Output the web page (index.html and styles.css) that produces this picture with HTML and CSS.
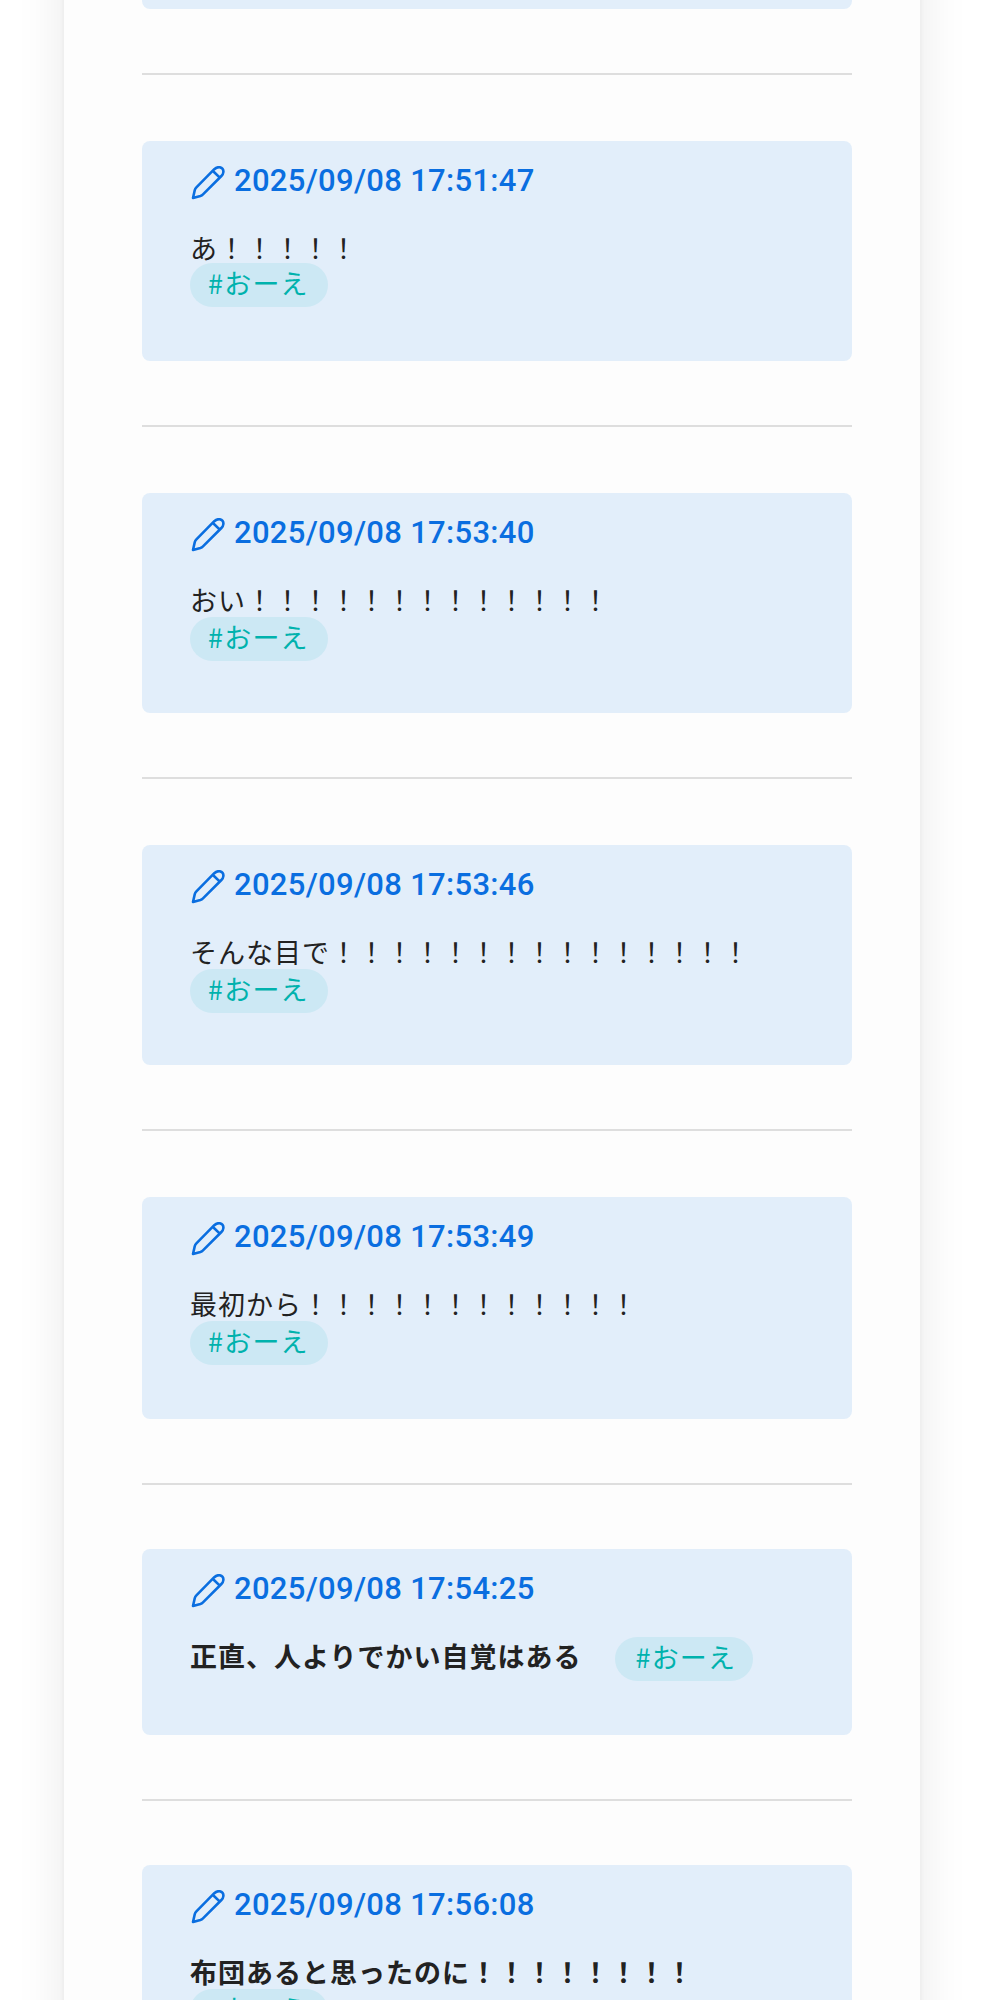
FILE: index.html
```
<!DOCTYPE html>
<html lang="ja">
<head>
  <meta charset="UTF-8">
  <meta name="viewport" content="width=device-width, initial-scale=1.0">
  <title>#おーえ</title>
  <link rel="stylesheet" href="styles.css">
</head>
<body>

  <svg class="defs">
    <symbol id="pencil" viewBox="0 0 34 34">
      <path d="M2 32 L3.8 24 Q4.2 22.6 5.4 21.4 L23.3 3.2 Q25.6 1 28.6 1.2 Q32.6 2 32.4 6 Q32.2 8.2 30.4 10 L12 28.3 Q10.9 29.4 9.4 29.9 Z M22.2 5.2 L28.8 11.6"/>
    </symbol>
  </svg>

  <main class="container">
    <article class="post first"></article>
    <hr>

    <article class="post short">
      <a class="date" href="#"><svg class="icon"><use href="#pencil"/></svg><span>2025/09/08 17:51:47</span></a>
      <p class="text">あ！！！！！</p>
      <a class="tag" href="#">#おーえ</a>
    </article>
    <hr>

    <article class="post">
      <a class="date" href="#"><svg class="icon"><use href="#pencil"/></svg><span>2025/09/08 17:53:40</span></a>
      <p class="text">おい！！！！！！！！！！！！！</p>
      <a class="tag" href="#">#おーえ</a>
    </article>
    <hr>

    <article class="post">
      <a class="date" href="#"><svg class="icon"><use href="#pencil"/></svg><span>2025/09/08 17:53:46</span></a>
      <p class="text">そんな目で！！！！！！！！！！！！！！！</p>
      <a class="tag" href="#">#おーえ</a>
    </article>
    <hr>

    <article class="post tall">
      <a class="date" href="#"><svg class="icon"><use href="#pencil"/></svg><span>2025/09/08 17:53:49</span></a>
      <p class="text">最初から！！！！！！！！！！！！</p>
      <a class="tag" href="#">#おーえ</a>
    </article>
    <hr class="tight">

    <article class="post inline">
      <a class="date" href="#"><svg class="icon"><use href="#pencil"/></svg><span>2025/09/08 17:54:25</span></a>
      <div class="row">
        <p class="text bold">正直、人よりでかい自覚はある</p>
        <a class="tag" href="#">#おーえ</a>
      </div>
    </article>
    <hr class="tight">

    <article class="post">
      <a class="date" href="#"><svg class="icon"><use href="#pencil"/></svg><span>2025/09/08 17:56:08</span></a>
      <p class="text bold">布団あると思ったのに！！！！！！！！</p>
      <a class="tag" href="#">#おーえ</a>
    </article>
  </main>

</body>
</html>
```
FILE: styles.css
```
* {
  box-sizing: border-box;
}

html {
  overflow: hidden;
}

body {
  margin: 0;
  height: 2000px;
  overflow: hidden;
  background: #fff;
  color: #222;
  font-family: "Noto Sans CJK JP", sans-serif;
}

.defs {
  display: none;
}

.container {
  width: 856px;
  height: 2200px;
  margin: -100px 0 0 64px;
  padding: 100px 68px 0 78px;
  background: #fdfdfd;
  box-shadow: 0 0 48px rgba(0, 0, 0, 0.09), 0 0 6px rgba(0, 0, 0, 0.05);
}

.post {
  height: 220px;
  padding: 22px 48px 0;
  border-radius: 8px;
  background: #e2eefa;
}

.post.first {
  height: 9px;
  padding: 0;
  border-radius: 0 0 8px 8px;
}

.post.tall {
  height: 222px;
}

.post.inline {
  height: 186px;
}

hr {
  height: 2px;
  margin: 64px 0 66px;
  border: 0;
  background: #dedede;
}

hr.tight {
  margin-bottom: 64px;
}

.date {
  display: flex;
  align-items: center;
  height: 36px;
  color: #0a6ee0;
  font-family: Roboto, sans-serif;
  font-size: 31px;
  font-weight: 500;
  letter-spacing: 0.3px;
  line-height: 36px;
  text-decoration: none;
}

.icon {
  width: 34px;
  height: 34px;
  margin: 4px 9px 0 1px;
  fill: none;
  stroke: currentColor;
  stroke-width: 2.6;
  stroke-linejoin: round;
}

.text {
  height: 66px;
  margin: 0;
  padding-top: 30px;
  font-size: 27px;
  font-weight: 400;
  letter-spacing: 1px;
  line-height: 37px;
  white-space: nowrap;
}

.short .text {
  height: 64px;
}

.text.bold {
  font-weight: 700;
}

.tag {
  display: block;
  width: 138px;
  height: 44px;
  padding-left: 18px;
  border-radius: 22px;
  background: #cce8f4;
  color: #00b2ad;
  font-size: 27px;
  font-weight: 400;
  line-height: 39px;
  letter-spacing: 1.2px;
  text-decoration: none;
}

.row {
  display: flex;
}

.row .tag {
  margin: 30px 0 0 34px;
  padding-left: 20px;
}
```
